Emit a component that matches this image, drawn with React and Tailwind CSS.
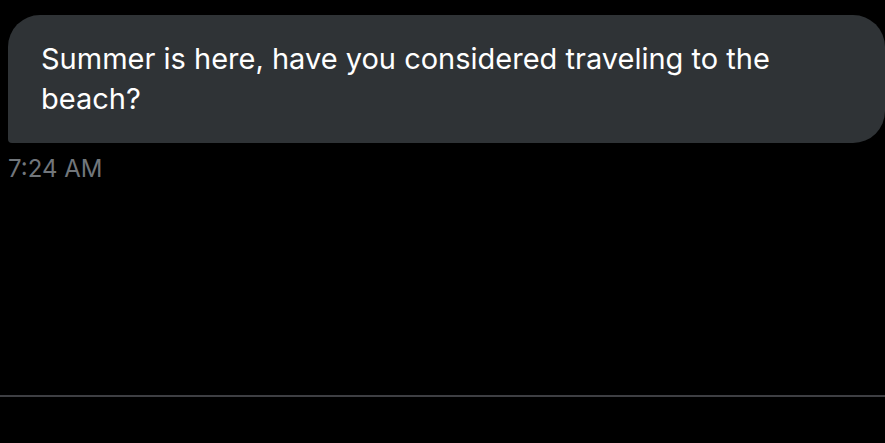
export default function App() {
  return (
    <div className="w-[885px] h-[443px] bg-black flex flex-col overflow-hidden" style={{ fontFamily: 'Inter, "Liberation Sans", Arial, sans-serif' }}>
      <div className="pt-[15px] pl-2">
        <div className="w-[877px] bg-[#2f3336] rounded-tl-[32px] rounded-tr-[32px] rounded-br-[32px] rounded-bl-[4px] pl-[33px] pr-[80px] py-[24px] text-white text-[29px] leading-[40px]">
          Summer is here, have you considered traveling to the beach?
        </div>
        <div className="mt-[11px] text-[24px] leading-[30px] text-[#71767b]">7:24 AM</div>
      </div>
      <div className="flex-1" />
      <div className="h-[2px] bg-[#3e3f43] mb-[46px]" />
    </div>
  );
}
